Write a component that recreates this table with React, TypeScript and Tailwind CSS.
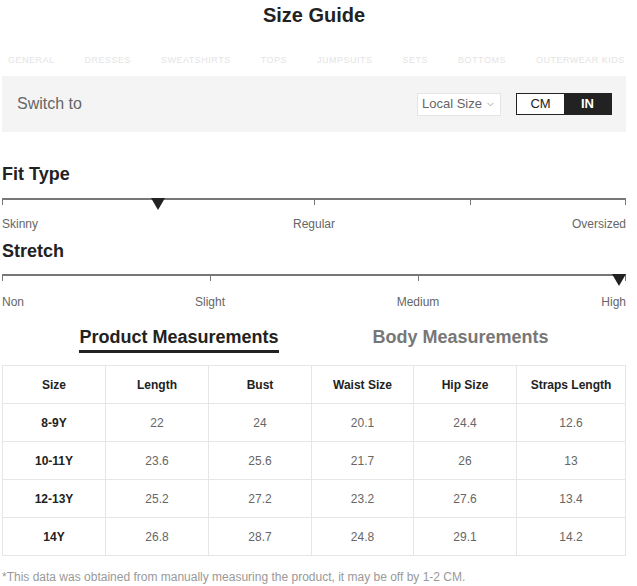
import { ChevronDown } from 'lucide-react';

const categories = ['GENERAL', 'DRESSES', 'SWEATSHIRTS', 'TOPS', 'JUMPSUITS', 'SETS', 'BOTTOMS', 'OUTERWEAR KIDS'];

const columns = ['Size', 'Length', 'Bust', 'Waist Size', 'Hip Size', 'Straps Length'];

const rows = [
  ['8-9Y', '22', '24', '20.1', '24.4', '12.6'],
  ['10-11Y', '23.6', '25.6', '21.7', '26', '13'],
  ['12-13Y', '25.2', '27.2', '23.2', '27.6', '13.4'],
  ['14Y', '26.8', '28.7', '24.8', '29.1', '14.2'],
];

function Marker() {
  return (
    <svg width="14" height="12" viewBox="0 0 14 12" className="block">
      <path d="M0 0 L14 0 L7 12 Z" fill="#222" />
    </svg>
  );
}

// a single horizontal scale with ticks and a marker
function Scale({ ticks, marker }: { ticks: number[]; marker: 'quarter' | 'end' }) {
  return (
    <div className="relative h-[2px] bg-[#777]">
      {ticks.map((t) => (
        <span
          key={t}
          className={`absolute top-0 h-[7px] w-px bg-[#777] ${
            t === 0 ? 'left-0' : t === 100 ? 'right-0' : t === 50 ? 'left-1/2' : t === 75 ? 'left-3/4' : t === 33 ? 'left-1/3' : 'left-2/3'
          }`}
        />
      ))}
      {marker === 'quarter' ? (
        <div className="absolute top-0 left-1/4 -translate-x-1/2">
          <Marker />
        </div>
      ) : (
        <div className="absolute top-0 right-0">
          <Marker />
        </div>
      )}
    </div>
  );
}

export default function App() {
  return (
    <div className="w-[637px] h-[586px] overflow-hidden bg-white font-['Liberation_Sans',Arial,sans-serif]">
      <div className="w-[624px] ml-[2px]">
        {/* Title */}
        <h1 className="pt-[3px] text-center text-[20px] leading-[24px] font-bold text-[#222]">Size Guide</h1>

        {/* Category tabs (scrolled, barely visible) */}
        <div className="mt-[29px] h-[8px] flex items-center gap-[30px] pl-[6px] text-[9px] leading-[8px] tracking-[0.5px] text-[#e4e4e4] whitespace-nowrap">
          {categories.map((c) => (
            <span key={c}>{c}</span>
          ))}
        </div>

        {/* Switch bar */}
        <div className="mt-[12px] h-[56px] bg-[#f4f4f4] flex items-center justify-between pl-[15px] pr-[14px]">
          <span className="text-[16px] text-[#666]">Switch to</span>
          <div className="flex items-center gap-[15px]">
            <div className="h-[23px] w-[84px] bg-white border border-[#e5e5e5] flex items-center justify-center gap-[3px] text-[13px] text-[#666]">
              Local Size
              <ChevronDown size={11} strokeWidth={1.5} className="text-[#888]" />
            </div>
            <div className="flex h-[22px] w-[96px] border border-[#222] text-[13px]">
              <span className="flex-1 flex items-center justify-center bg-white text-[#222]">CM</span>
              <span className="flex-1 flex items-center justify-center bg-[#222] text-white font-bold">IN</span>
            </div>
          </div>
        </div>

        {/* Fit type */}
        <h2 className="mt-[31px] text-[18px] leading-[22px] font-bold text-[#222]">Fit Type</h2>
        <div className="mt-[13px]">
          <Scale ticks={[0, 50, 75, 100]} marker="quarter" />
        </div>
        <div className="mt-[17px] grid grid-cols-4 text-[12px] leading-[14px] text-[#666]">
          <span>Skinny</span>
          <span className="col-span-2 text-center">Regular</span>
          <span className="text-right">Oversized</span>
        </div>

        {/* Stretch */}
        <h2 className="mt-[9px] text-[18px] leading-[22px] font-bold text-[#222]">Stretch</h2>
        <div className="mt-[12px]">
          <Scale ticks={[0, 33, 66, 100]} marker="end" />
        </div>
        <div className="mt-[19px] grid grid-cols-6 text-[12px] leading-[14px] text-[#666]">
          <span>Non</span>
          <span className="col-span-2 text-center">Slight</span>
          <span className="col-span-2 text-center">Medium</span>
          <span className="text-right">High</span>
        </div>

        {/* Measurement tabs */}
        <div className="mt-[17px] flex justify-center gap-[94px] text-[18px] leading-[22px] font-bold">
          <span className="text-[#222] border-b-[3px] border-[#222] pb-[2px]">Product Measurements</span>
          <span className="text-[#777]">Body Measurements</span>
        </div>

        {/* Table */}
        <table className="mt-[12px] w-[624px] table-fixed border-collapse text-[12px]">
          <colgroup>
            <col className="w-[103px]" />
            <col className="w-[103px]" />
            <col className="w-[103px]" />
            <col className="w-[102px]" />
            <col className="w-[103px]" />
            <col />
          </colgroup>
          <thead>
            <tr className="h-[38px]">
              {columns.map((c) => (
                <th key={c} className="border border-[#e6e6e6] font-bold text-[#222]">
                  {c}
                </th>
              ))}
            </tr>
          </thead>
          <tbody>
            {rows.map((r) => (
              <tr key={r[0]} className="h-[38px]">
                {r.map((v, i) => (
                  <td
                    key={i}
                    className={`border border-[#e6e6e6] text-center ${i === 0 ? 'font-bold text-[#222]' : 'text-[#666]'}`}
                  >
                    {v}
                  </td>
                ))}
              </tr>
            ))}
          </tbody>
        </table>

        <p className="mt-[14px] text-[12px] leading-[14px] text-[#999]">
          *This data was obtained from manually measuring the product, it may be off by 1-2 CM.
        </p>
      </div>
    </div>
  );
}
